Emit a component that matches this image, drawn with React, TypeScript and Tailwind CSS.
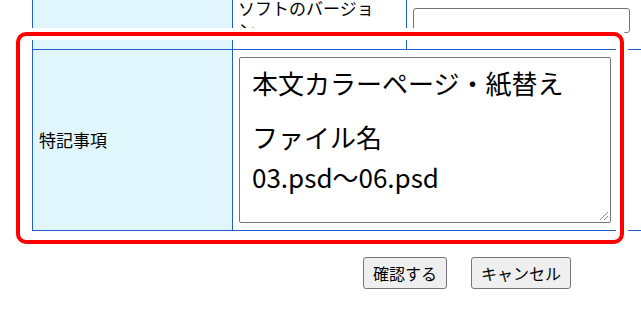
export default function App() {
  return (
    <div className="relative w-[641px] h-[311px] overflow-hidden bg-white text-black font-['Noto_Sans_CJK_JP',sans-serif]">
      <div className="ml-[32px] mt-[-8px] w-[700px] border-l border-[#2260d0]">
        {/* Row 1 */}
        <div className="flex h-[58px] border-b border-[#2260d0]">
          <div className="w-[199px] shrink-0 bg-[#e1f5fc]" />
          <div className="w-[174px] shrink-0 border-l border-[#2260d0] pl-[5px] pt-[5px]">
            <div className="w-[150px] text-[17px] leading-[22px]">ソフトのバージョン</div>
          </div>
          <div className="flex-1 border-l border-[#2260d0] pl-[6px] pt-[16px]">
            <div className="w-[217px] h-[25px] border border-[#767676] rounded-[3px] bg-white" />
          </div>
        </div>
        {/* Row 2 */}
        <div className="flex h-[181px] border-b border-[#2260d0]">
          <div className="w-[199px] shrink-0 bg-[#e1f5fc] flex items-center pl-[6px] text-[17px] leading-[22px]">
            特記事項
          </div>
          <div className="flex-1 border-l border-[#2260d0] pl-[6px] pt-[7px]">
            <div className="relative w-[372px] h-[166px] border border-[#767676] rounded-[2px] bg-white pl-[12px] pt-[5px] text-[26px] leading-[40px]">
              <div className="mb-[14px]">本文カラーページ・紙替え</div>
              <div>ファイル名</div>
              <div>03.psd～06.psd</div>
              <svg className="absolute right-[1px] bottom-[1px]" width="12" height="12" viewBox="0 0 12 12">
                <line x1="3" y1="11" x2="11" y2="3" stroke="#8a8a8a" strokeWidth="1" />
                <line x1="7" y1="11" x2="11" y2="7" stroke="#8a8a8a" strokeWidth="1" />
              </svg>
            </div>
          </div>
        </div>
      </div>
      {/* Buttons */}
      <div className="flex gap-[24px] ml-[363px] mt-[26px]">
        <button className="w-[84px] h-[32px] border border-[#767676] rounded-[3px] bg-[#efefef] text-[16px] leading-[20px] text-black">
          確認する
        </button>
        <button className="w-[100px] h-[32px] border border-[#767676] rounded-[3px] bg-[#efefef] text-[16px] leading-[20px] text-black">
          キャンセル
        </button>
      </div>
      {/* Red annotation */}
      <div className="absolute left-[16px] top-[32px] w-[608px] h-[212px] border-4 border-[#ff0000] rounded-[10px] shadow-[0_0_0_4px_#ffffff,inset_0_0_0_4px_#ffffff]" />
    </div>
  );
}
